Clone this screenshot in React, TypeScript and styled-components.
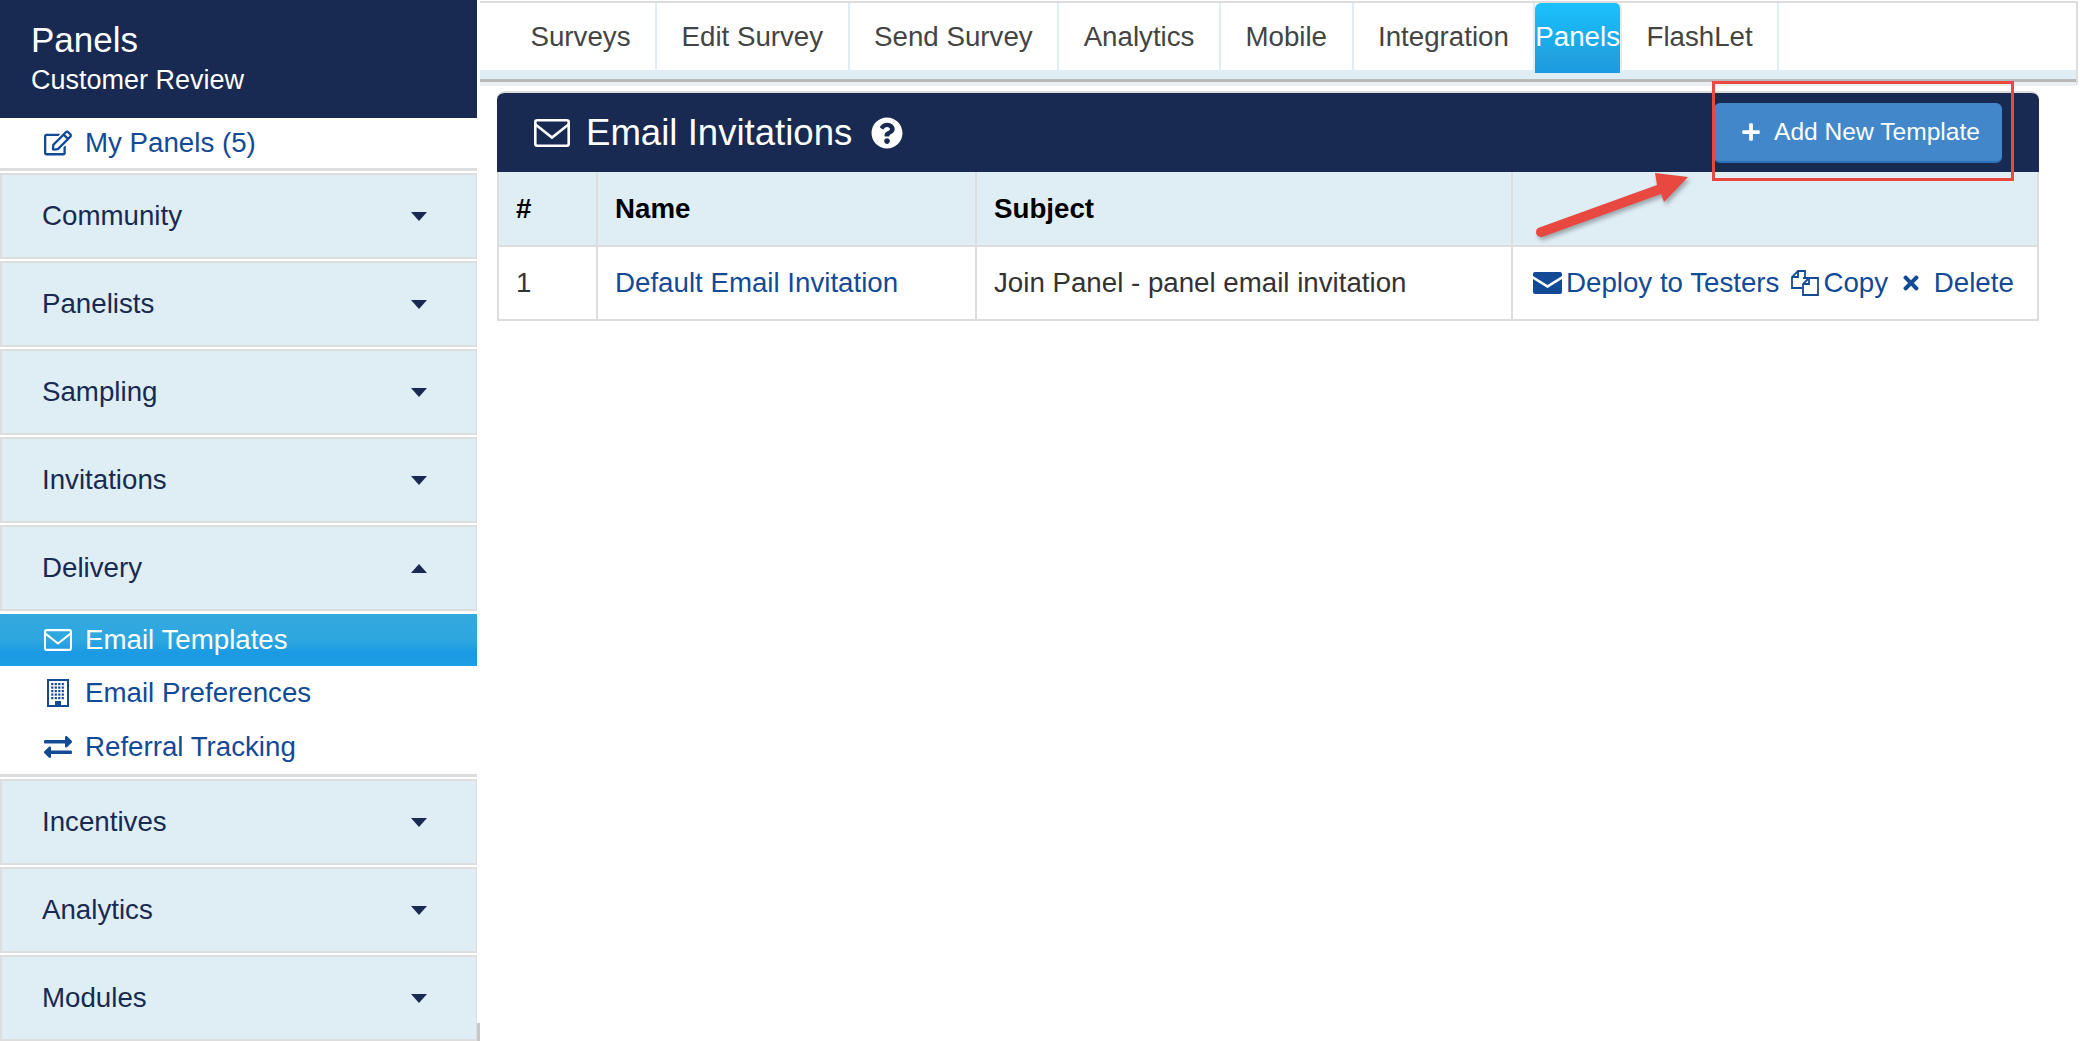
import React from 'react';
import styled, { createGlobalStyle } from 'styled-components';
import { FaCheck } from 'react-icons/fa';
import {
  FaExchangeAlt,
  FaPlus,
  FaQuestionCircle,
  FaRegEdit,
  FaTimes,
} from 'react-icons/fa';

const GlobalStyle = createGlobalStyle`
  html, body {
    margin: 0;
    background: #fff;
    font-family: "Liberation Sans", Arial, sans-serif;
  }
`;

const Page = styled.div`
  position: relative;
  display: flex;
  width: 2080px;
  height: 1041px;
  overflow: hidden;
  background: #fff;
`;

const Sidebar = styled.aside`
  position: relative;
  width: 477px;
  flex-shrink: 0;
  &::after {
    content: '';
    position: absolute;
    left: 477px;
    top: 1023px;
    width: 3px;
    height: 18px;
    background: #c8c8c8;
  }
`;

const SideHeader = styled.header`
  height: 118px;
  box-sizing: border-box;
  padding: 17px 0 0 31px;
  background: #182a52;
  color: #fff;
`;

const SideTitle = styled.div`
  font-size: 35px;
  line-height: 46px;
`;

const SideSubtitle = styled.div`
  font-size: 27px;
  line-height: 35px;
`;

const LinkRow = styled.a<{ $active?: boolean; $height?: number }>`
  display: flex;
  align-items: center;
  height: ${(p) => p.$height ?? 54}px;
  box-sizing: border-box;
  padding-left: 44px;
  font-size: 27.7px;
  color: ${(p) => (p.$active ? '#fff' : '#134a96')};
  background: ${(p) =>
    p.$active ? 'linear-gradient(#33a9de, #2ea6df 50%, #1b9ae3 75%, #1d9de4)' : 'transparent'};
`;

const IconSlot = styled.span`
  display: flex;
  justify-content: center;
  align-items: center;
  width: 28px;
  margin-right: 13px;
`;

const Divider = styled.div`
  height: 3px;
  background: #ddd;
`;

const Accordion = styled.div`
  display: flex;
  align-items: center;
  justify-content: space-between;
  height: 86px;
  box-sizing: border-box;
  margin-top: 2px;
  padding: 0 49px 0 40px;
  border: 2px solid #ddd;
  border-right-width: 1px;
  background: #dfedf5;
  font-size: 27.7px;
  color: #182a52;
`;

const Caret = styled.span<{ $up?: boolean }>`
  width: 0;
  height: 0;
  border-left: 8px solid transparent;
  border-right: 8px solid transparent;
  ${(p) => (p.$up ? 'border-bottom: 9px solid #182a52;' : 'border-top: 9px solid #182a52;')}
`;

const Main = styled.main`
  flex: 1;
  margin-left: 3px;
`;

const TopBar = styled.div`
  width: 1598px;
  box-sizing: border-box;
  margin-top: 1px;
  border-top: 2px solid #ddd;
  border-right: 2px solid #ddd;
  border-radius: 0 0 4px 0;
`;

const TabRow = styled.nav`
  display: flex;
  height: 67px;
  padding-left: 26px;
`;

const Tab = styled.a<{ $active?: boolean }>`
  display: flex;
  align-items: center;
  height: ${(p) => (p.$active ? 70 : 67)}px;
  box-sizing: border-box;
  padding: ${(p) => (p.$active ? '0 0 3px 0' : '0')} 24.5px;
  padding-bottom: ${(p) => (p.$active ? 3 : 0)}px;
  border-right: 2px solid #dfedf5;
  border-radius: ${(p) => (p.$active ? '6px 6px 0 0' : '0')};
  font-size: 27.7px;
  color: ${(p) => (p.$active ? '#fff' : '#444')};
  background: ${(p) =>
    p.$active ? 'linear-gradient(#1cc0fd, #19aeec 50%, #22a2e0 75%, #1b9ae3)' : 'transparent'};
  position: relative;
`;

const TabBand = styled.div`
  height: 9px;
  background: #dfedf5;
`;

const TabShadow = styled.div`
  height: 3px;
  background: #b9b9b9;
`;

const TabGlow = styled.div`
  height: 4px;
  background: #e9eff3;
`;

const Panel = styled.section`
  width: 1542px;
  margin: 5px 0 0 17px;
`;

const PanelHeader = styled.div`
  display: flex;
  align-items: center;
  height: 81px;
  box-sizing: border-box;
  padding: 0 37px 0 37px;
  border-top: 2px solid #ddd;
  border-radius: 8px 8px 0 0;
  background: #182a52;
  color: #fff;
`;

const PanelTitle = styled.h2`
  margin: 0 19px 0 16px;
  font-size: 36.6px;
  font-weight: 400;
`;

const AddButton = styled.button`
  display: flex;
  align-items: center;
  gap: 13px;
  height: 60px;
  margin-left: auto;
  padding: 0 22px 0 27px;
  border: 0;
  border-bottom: 2px solid #2f71b8;
  border-radius: 6px;
  background: #4187c9;
  color: #fff;
  font: 24.6px "Liberation Sans", Arial, sans-serif;
`;

const Table = styled.table`
  width: 100%;
  border-collapse: collapse;
  table-layout: fixed;
  font-size: 27.7px;
  color: #333;
`;

const Th = styled.th<{ $width?: number }>`
  height: 74px;
  width: ${(p) => (p.$width ? `${p.$width}px` : 'auto')};
  box-sizing: border-box;
  padding: 0 0 0 17px;
  border: 2px solid #ddd;
  border-top: 0;
  background: #dfedf5;
  color: #000;
  text-align: left;
`;

const Td = styled.td`
  height: 74px;
  box-sizing: border-box;
  padding: 0 0 0 17px;
  border: 2px solid #ddd;
`;

const CellLink = styled.a`
  color: #134a96;
`;

const Actions = styled.div`
  display: flex;
  align-items: center;
  padding-left: 3px;
  color: #134a96;
  white-space: nowrap;
`;

const Action = styled.a`
  display: flex;
  align-items: center;
  margin-right: 12px;
  gap: 4px;
`;

const Callout = styled.div`
  position: absolute;
  left: 1712px;
  top: 81px;
  width: 302px;
  height: 100px;
  box-sizing: border-box;
  border: 3px solid #e8483f;
`;

const CalloutArrow = styled.svg`
  position: absolute;
  left: 1530px;
  top: 165px;
  filter: drop-shadow(2px 3px 2px rgba(0, 0, 0, 0.3));
`;

const MailOutline = ({ color, width, height }: { color: string; width: number; height: number }) => (
  <svg width={width} height={height} viewBox="0 0 36 28" fill="none" stroke={color} strokeWidth="2.6">
    <rect x="1.3" y="1.3" width="33.4" height="25.4" rx="2" />
    <path d="M1.5 5.5 L18 18.5 L34.5 5.5" />
  </svg>
);

const MailSolid = () => (
  <svg width="29" height="22" viewBox="0 0 29 22">
    <path d="M2 0h25a2 2 0 0 1 2 2v2L14.5 13 0 4V2a2 2 0 0 1 2-2z" fill="#134a96" />
    <path d="M0 7l14.5 9L29 7v13a2 2 0 0 1-2 2H2a2 2 0 0 1-2-2z" fill="#134a96" />
  </svg>
);

const Building = () => (
  <svg width="22" height="28" viewBox="0 0 22 28">
    <rect x="1" y="1" width="20" height="26" fill="none" stroke="#134a96" strokeWidth="2" />
    {[4, 7.5, 11, 14.5, 18].map((y) =>
      [4, 7.5, 11, 14.5].map((x) => (
        <rect key={`${x}-${y}`} x={x + 0.2} y={y} width="2.2" height="2.2" fill="#134a96" />
      )),
    )}
    <rect x="8" y="22" width="6" height="5" fill="#134a96" />
  </svg>
);

const CopyPages = () => (
  <svg width="28" height="26" viewBox="0 0 28 26" fill="none" stroke="#134a96" strokeWidth="1.8">
    <path d="M11 18H1V7l6-6h7v6" />
    <path d="M7 1v6H1" />
    <path d="M12 8h15v17H12V14l6-6" />
    <path d="M18 8v6h-6" />
  </svg>
);

const collapsedTop = ['Community', 'Panelists', 'Sampling', 'Invitations'];
const collapsedBottom = ['Incentives', 'Analytics', 'Modules'];
const tabs = ['Surveys', 'Edit Survey', 'Send Survey', 'Analytics', 'Mobile', 'Integration', 'Panels', 'FlashLet'];

const App: React.FC = () => {
  return (
    <Page>
      <GlobalStyle />
      <Sidebar>
        <SideHeader>
          <SideTitle>Panels</SideTitle>
          <SideSubtitle>Customer Review</SideSubtitle>
        </SideHeader>
        <LinkRow $height={50}>
          <IconSlot>
            <FaRegEdit size={28} />
          </IconSlot>
          My Panels (5)
        </LinkRow>
        <Divider />
        {collapsedTop.map((label) => (
          <Accordion key={label}>
            {label}
            <Caret />
          </Accordion>
        ))}
        <Accordion>
          Delivery
          <Caret $up />
        </Accordion>
        <LinkRow $active $height={52} style={{ marginTop: 3 }}>
          <IconSlot>
            <MailOutline color="#fff" width={28} height={22} />
          </IconSlot>
          Email Templates
        </LinkRow>
        <LinkRow>
          <IconSlot>
            <Building />
          </IconSlot>
          Email Preferences
        </LinkRow>
        <LinkRow>
          <IconSlot>
            <FaExchangeAlt size={28} />
          </IconSlot>
          Referral Tracking
        </LinkRow>
        <Divider />
        {collapsedBottom.map((label) => (
          <Accordion key={label}>
            {label}
            <Caret />
          </Accordion>
        ))}
        <Divider style={{ marginTop: 3 }} />
      </Sidebar>

      <Main>
        <TopBar>
          <TabRow>
            {tabs.map((tab) => (
              <Tab key={tab} $active={tab === 'Panels'}>
                {tab}
              </Tab>
            ))}
          </TabRow>
          <TabBand />
          <TabShadow />
          <TabGlow />
        </TopBar>

        <Panel>
          <PanelHeader>
            <MailOutline color="#fff" width={36} height={28} />
            <PanelTitle>Email Invitations</PanelTitle>
            <FaQuestionCircle size={32} />
            <AddButton>
              <FaPlus size={20} />
              Add New Template
            </AddButton>
          </PanelHeader>
          <Table>
            <thead>
              <tr>
                <Th $width={99}>#</Th>
                <Th $width={379}>Name</Th>
                <Th $width={536}>Subject</Th>
                <Th />
              </tr>
            </thead>
            <tbody>
              <tr>
                <Td>1</Td>
                <Td>
                  <CellLink>Default Email Invitation</CellLink>
                </Td>
                <Td>Join Panel - panel email invitation</Td>
                <Td>
                  <Actions>
                    <Action>
                      <MailSolid />
                      Deploy to Testers
                    </Action>
                    <Action>
                      <CopyPages />
                      Copy
                    </Action>
                    <Action>
                      <FaTimes size={22} />
                      &nbsp;Delete
                    </Action>
                  </Actions>
                </Td>
              </tr>
            </tbody>
          </Table>
        </Panel>
      </Main>

      <Callout />
      <CalloutArrow width="170" height="75" viewBox="0 0 170 75">
        <path
          d="M8 63 L127 20 L125 8 L158 12 L134 37 L131 29 L12 72 Q6 72 6 67 Q6 64 8 63 Z"
          fill="#e8483f"
        />
      </CalloutArrow>
    </Page>
  );
};

export default App;
